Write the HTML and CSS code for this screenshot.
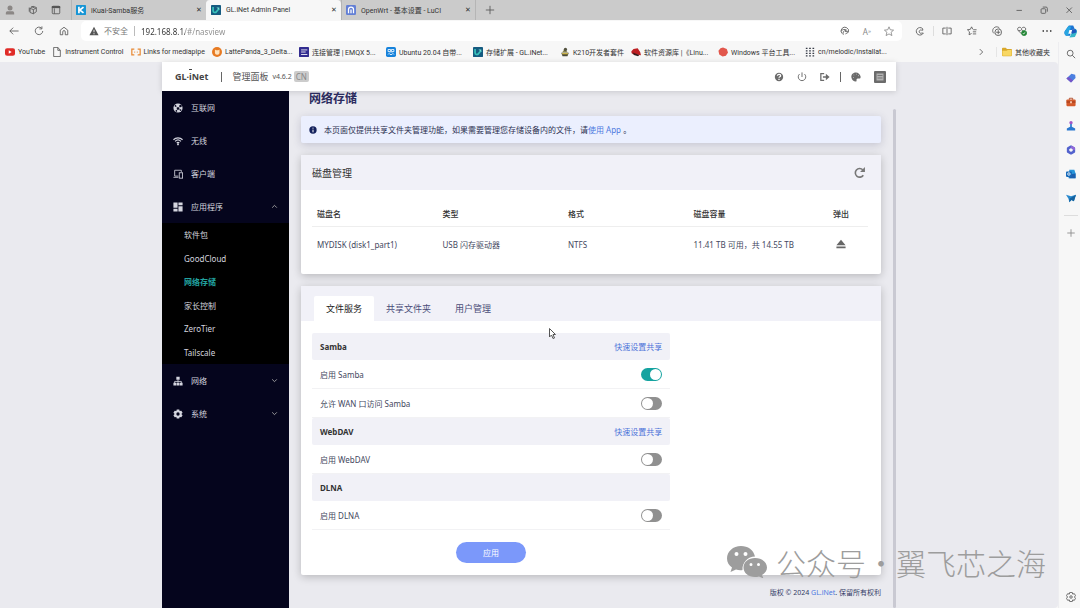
FILE: index.html
```html
<!DOCTYPE html>
<html lang="zh-CN">
<head>
  <meta charset="UTF-8" />
  <meta name="viewport" content="width=device-width, initial-scale=1" />
  <title>GL.iNet Admin Panel</title>
  <link rel="stylesheet" href="styles.css">
</head>
<body>

  <header class="titlebar">
    <div class="titlebar-tools">
      <button class="icon-btn" aria-label="Profile"><svg viewBox="0 0 24 24"><circle cx="12" cy="7" r="6" fill="#8b8785"/><path d="M2 23v-4c0-3 3-4 5-4h10c2 0 5 1 5 4v4z" fill="#8b8785"/></svg></button>
      <button class="icon-btn" aria-label="Workspaces"><svg viewBox="0 0 24 24" class="line"><path d="M7 6l5-3 8 3v10l-7 5-8-3V8zM5 8l8 3 7-4M13 11v10M3 6v10M8 4l8 3"/></svg></button>
      <button class="icon-btn" aria-label="Tab actions"><svg viewBox="0 0 24 24" class="line"><rect x="3" y="3" width="18" height="18" rx="2"/><path d="M2 5h20" stroke-width="5"/><path d="M8 8v13"/></svg></button>
    </div>
    <nav class="tabs">
      <div class="tab">
        <svg viewBox="0 0 24 24"><rect width="24" height="24" rx="2" fill="#1795d5"/><path d="M7 4v16M18 5l-9 7 9 7" fill="none" stroke="#fff" stroke-width="4"/></svg>
        <a href="#">iKuai-Samba服务</a>
        <button aria-label="Close">✕</button>
      </div>
      <div class="tab active">
        <svg viewBox="0 0 24 24"><rect width="24" height="24" rx="2" fill="#155b80"/><path d="M5 5v9c0 5 6 5 8 2l6-7" fill="none" stroke="#39c3bb" stroke-width="4"/><path d="M13 6h7v6z" fill="#78e1d6"/></svg>
        <a href="#">GL.iNet Admin Panel</a>
        <button aria-label="Close">✕</button>
      </div>
      <div class="tab">
        <svg viewBox="0 0 24 24"><rect width="24" height="24" rx="3" fill="#637fd5"/><path d="M6 20V11a6 6 0 0 1 12 0v9M12 11v9" fill="none" stroke="#fff" stroke-width="3"/></svg>
        <a href="#">OpenWrt - 基本设置 - LuCI</a>
        <button aria-label="Close">✕</button>
      </div>
    </nav>
    <button class="icon-btn new-tab" aria-label="New tab"><svg viewBox="0 0 24 24" class="line"><path d="M12 2v20M2 12h20"/></svg></button>
    <div class="window-buttons">
      <button class="icon-btn" aria-label="Minimize"><svg viewBox="0 0 24 24" class="line"><path d="M6 13h13"/></svg></button>
      <button class="icon-btn" aria-label="Restore"><svg viewBox="0 0 24 24" class="line"><rect x="5" y="9" width="11" height="11" rx="2"/><path d="M9 5h8q3 0 3 3v8"/></svg></button>
      <button class="icon-btn" aria-label="Close"><svg viewBox="0 0 24 24" class="line"><path d="M6 6l13 13M19 6L6 19"/></svg></button>
    </div>
  </header>

  <div class="toolbar">
    <div class="toolbar-nav">
      <button class="icon-btn" aria-label="Back"><svg viewBox="0 0 24 24" class="line"><path d="M23 12H2M10 4l-8 8 8 8"/></svg></button>
      <button class="icon-btn" aria-label="Reload"><svg viewBox="0 0 24 24" class="line"><path d="M21 12a9 9 0 1 1-3-7M19 1v6h-6"/></svg></button>
      <button class="icon-btn" aria-label="Home"><svg viewBox="0 0 24 24" class="line"><path d="M3 10l9-7 9 7v11h-6v-7a3 3 0 0 0-6 0v7H3z"/></svg></button>
    </div>
    <div class="address">
      <svg viewBox="0 0 24 24"><path d="M12 2L1 22h22z" fill="#555"/><path d="M12 9v6M12 17v3" stroke="#fff" stroke-width="2"/></svg>
      <label for="url">不安全</label>
      <input id="url" type="text" value="192.168.8.1/#/nasview">
      <button class="icon-btn" aria-label="Collections"><svg viewBox="0 0 24 24" class="line"><path d="M5 18a9 9 0 1 1 15-3l-7 4M3 12c3-4 9-5 13-2M8 21c-2-5 0-10 7-11M12 13h7"/></svg></button>
      <button class="icon-btn read" aria-label="Read aloud">A<sup>»</sup></button>
      <button class="icon-btn" aria-label="Favorite"><svg viewBox="0 0 24 24" class="line thin"><path d="M12 2l3 7 8 1-6 5 2 8-7-4-7 4 2-8-6-5 8-1z"/></svg></button>
    </div>
    <div class="toolbar-tools">
      <button class="icon-btn" aria-label="Extensions"><svg viewBox="0 0 24 24" class="line"><path d="M18 6A9 9 0 1 0 20 17h-4a4 4 0 1 1 0-7h3z"/></svg></button>
      <span class="separator"></span>
      <button class="icon-btn" aria-label="Split screen"><svg viewBox="0 0 24 24" class="line"><path d="M9 5H2v14h7M15 5h7v14h-7M12 2v20"/></svg></button>
      <button class="icon-btn" aria-label="Favorites"><svg viewBox="0 0 24 24" class="line"><path d="M14 8l-3-6-3 6-7 1 5 5-1 7 6-3M15 9h8M14 14h8M14 19h8"/></svg></button>
      <button class="icon-btn" aria-label="Collections"><svg viewBox="0 0 24 24" class="line"><path d="M5 18c-7-6-2-15 5-16 4 0 7 1 8 4"/><circle cx="15" cy="15" r="8"/><path d="M15 10v10M10 15h10"/></svg></button>
      <button class="icon-btn" aria-label="Performance"><svg viewBox="0 0 24 24" class="line"><path d="M11 19l-8-8c-5-7 4-11 8-5 4-6 13-2 9 4M3 11h5l3-3 3 5"/><circle cx="17" cy="17" r="6" fill="#238636" stroke="#238636"/><path d="M14 17l2 2 4-4" stroke="#fff"/></svg></button>
      <button class="icon-btn" aria-label="More"><svg viewBox="0 0 24 24"><circle cx="3" cy="12" r="2"/><circle cx="12" cy="12" r="2"/><circle cx="21" cy="12" r="2"/></svg></button>
      <button class="icon-btn copilot" aria-label="Copilot"><svg viewBox="0 0 24 24"><path d="M9 1h8l3 7h-5L11 20H4C0 17 0 11 3 9z" fill="#1b74d4"/><path d="M3 9l5-7 5 1-5 17H4C0 17 0 12 3 9z" fill="#28a5e1"/><path d="M20 7c5 1 4 6 3 9l-3 6-10 1 3-6z" fill="#35b5c8"/><path d="M15 8h6q3 2 2 6l-8 2-3-2z" fill="#1c56bd"/><path d="M10 9h5l-2 7H8z" fill="#fff"/></svg></button>
    </div>
  </div>

  <div class="window">
    <div class="window-main">
      <nav class="bookmarks">
        <a href="#"><svg viewBox="0 0 24 24"><rect y="3" width="24" height="18" rx="5" fill="#e02b27"/><path d="M9 8v8l7-4z" fill="#fff"/></svg><span>YouTube</span></a>
        <a href="#"><svg viewBox="0 0 24 24" class="line"><path d="M4 1h10l6 7v15H4zM14 1v7h6"/></svg><span>Instrument Control</span></a>
        <a href="#"><svg viewBox="0 0 24 24" fill="none" stroke="#e88a36" stroke-width="3"><path d="M8 5H2v14h6M16 5h6v14h-6M8 12h2M14 12h2"/></svg><span>Links for mediapipe</span></a>
        <a href="#" class="long"><svg viewBox="0 0 24 24"><circle cx="12" cy="12" r="12" fill="#e77a22"/><path d="M7 6l3 2h5l3-2v9a6 6 0 0 1-11 0z" fill="#ffe3bd"/></svg><span>LattePanda_3_Delta...</span></a>
        <a href="#" class="long"><svg viewBox="0 0 24 24"><rect width="24" height="24" rx="2" fill="#322c90"/><path d="M5 7h15M5 12h11M5 18h15" stroke="#fff" stroke-width="2"/></svg><span>连接管理 | EMQX 5...</span></a>
        <a href="#" class="long"><svg viewBox="0 0 24 24"><rect width="24" height="24" rx="4" fill="#1682db"/><path d="M5 6h6v5H5zM13 6h6v5h-6zM5 18l5-5M19 18l-5-5M9 18h6" fill="none" stroke="#fff" stroke-width="2"/></svg><span>Ubuntu 20.04 自带...</span></a>
        <a href="#" class="long"><svg viewBox="0 0 24 24"><rect width="24" height="24" rx="2" fill="#155b80"/><path d="M5 5v9c0 5 6 5 8 2l6-7" fill="none" stroke="#39c3bb" stroke-width="4"/><path d="M13 6h7v6z" fill="#78e1d6"/></svg><span>存储扩展 - GL.iNet...</span></a>
        <a href="#"><svg viewBox="0 0 24 24"><path d="M3 14h18l-3 8H6z" fill="#4c4b38"/><path d="M5 13l6-8 8 8z" fill="#8b8752"/><circle cx="13" cy="6" r="4" fill="#54533f"/><path d="M5 16h14" stroke="#d1b84b" stroke-width="3"/></svg><span>K210开发者套件</span></a>
        <a href="#" class="long"><svg viewBox="0 0 24 24"><path d="M1 10l5-5 10-2 6 9 2 8-13-2C5 18 0 16 1 10z" fill="#bd2023"/><path d="M4 13l16 6-3 3-10-3z" fill="#351d1d"/></svg><span>软件资源库 |《Linu...</span></a>
        <a href="#" class="long"><svg viewBox="0 0 24 24"><path d="M12 1l9 4 3 8-5 8-8 2-8-5-2-9 5-6z" fill="#e2574c"/></svg><span>Windows 平台工具...</span></a>
        <a href="#" class="long"><svg viewBox="0 0 24 24"><path d="M2 3h4M10 3h4M18 3h4M2 9h4M10 9h4M18 9h4M2 15h4M10 15h4M18 15h4M2 21h4M10 21h4M18 21h4" stroke="#363b47" stroke-width="3"/></svg><span>cn/melodic/Installat...</span></a>
        <button class="icon-btn bookmarks-more" aria-label="More bookmarks"><svg viewBox="0 0 24 24" class="line"><path d="M9 5l7 7-7 7"/></svg></button>
        <a href="#" class="folder"><svg viewBox="0 0 24 24"><path d="M0 4q0-2 2-2h7l3 3h10q2 0 2 2v13q0 2-2 2H2q-2 0-2-2z" fill="#d9a82b"/><path d="M1 9h10l3-2h9v13q0 1-1 1H2q-1 0-1-1z" fill="#f8d763"/></svg><span>其他收藏夹</span></a>
      </nav>

      <div class="viewport">
        <div class="app">
          <header class="app-header">
            <a href="#" class="logo" aria-label="GL.iNet">GL<i>·</i><span class="logo-i">i</span>Net</a>
            <span class="divider"></span>
            <span class="panel-name">管理面板</span>
            <span class="version">v4.6.2</span>
            <span class="region">CN</span>
            <div class="app-actions">
              <button class="icon-btn" aria-label="帮助"><svg viewBox="0 0 24 24"><circle cx="12" cy="12" r="10"/><path d="M8 9c1-5 8-4 8 0 0 3-4 2-4 5M12 16v3" fill="none" stroke="#fff" stroke-width="3"/></svg></button>
              <button class="icon-btn" aria-label="电源"><svg viewBox="0 0 24 24" class="line"><path d="M6 5a9 9 0 1 0 12 0M12 1v11"/></svg></button>
              <button class="icon-btn" aria-label="退出"><svg viewBox="0 0 24 24"><path d="M10 4H2v16h8" fill="none" stroke="#6b6b6b" stroke-width="3"/><path d="M7 10h7V4l9 8-9 8v-6H7z"/></svg></button>
              <span class="divider"></span>
              <button class="icon-btn" aria-label="主题"><svg viewBox="0 0 24 24"><path d="M12 1C4 1 0 7 1 13s6 10 10 10c5 0 0-6 4-7 3-1 9 2 8-5-1-6-6-10-11-10z"/><g fill="#fff"><circle cx="6" cy="13" r="1"/><circle cx="7" cy="7" r="1"/><circle cx="13" cy="5" r="1"/><circle cx="18" cy="9" r="1"/></g></svg></button>
              <button class="icon-btn lang" aria-label="语言"><svg viewBox="0 0 24 24"><rect width="24" height="24" rx="2"/><rect x="5" y="5" width="14" height="14" fill="#b2b2b2"/><path d="M7 9h10M7 14h10" stroke="#777" stroke-width="2"/></svg></button>
            </div>
          </header>

          <div class="app-body">
            <nav class="sidebar">
              <a href="#"><svg viewBox="0 0 24 24"><circle cx="12" cy="12" r="11"/><path d="M6 7l6 6 6-6M12 13l-4 6M12 13l6 4" stroke="#05051d"/><g fill="#05051d"><circle cx="6" cy="7" r="2"/><circle cx="18" cy="7" r="3"/><circle cx="12" cy="13" r="3"/><circle cx="8" cy="19" r="2"/><circle cx="18" cy="17" r="2"/></g></svg><span>互联网</span></a>
              <a href="#"><svg viewBox="0 0 24 24" fill="none" stroke="#d4d5df" stroke-width="3"><path d="M1 9c6-6 16-6 22 0M5 13c4-4 10-4 14 0M9 17c2-2 4-2 6 0"/><circle cx="12" cy="20" r="1"/></svg><span>无线</span></a>
              <a href="#"><svg viewBox="0 0 24 24" fill="none" stroke="#d4d5df" stroke-width="2"><path d="M20 7V3H4v14h9M1 20h12"/><rect x="15" y="9" width="8" height="13"/></svg><span>客户端</span></a>
              <a href="#"><svg viewBox="0 0 24 24"><path d="M1 1h10v13H1zM1 16h10v7H1zM13 1h10v7H13zM13 10h10v13H13z"/></svg><span>应用程序</span><svg class="arrow" viewBox="0 0 24 24"><path d="M4 16l8-8 8 8"/></svg></a>
              <div class="submenu">
                <a href="#">软件包</a>
                <a href="#">GoodCloud</a>
                <a href="#" class="current">网络存储</a>
                <a href="#">家长控制</a>
                <a href="#">ZeroTier</a>
                <a href="#">Tailscale</a>
              </div>
              <a href="#"><svg viewBox="0 0 24 24"><path d="M8 2h8v7H8zM1 16h7v7H1zM9 16h6v7H9zM16 16h7v7h-7z"/><path d="M12 9v7M4 17v-4h16v4" fill="none" stroke="#d4d5df" stroke-width="2"/></svg><span>网络</span><svg class="arrow" viewBox="0 0 24 24"><path d="M4 8l8 8 8-8"/></svg></a>
              <a href="#"><svg viewBox="0 0 24 24"><path d="M9 1h6l1 4 4-1 3 5-3 3 3 3-3 5-4-1-1 4H9l-1-4-4 1-3-5 3-3-3-3 3-5 4 1z"/><circle cx="12" cy="12" r="4" fill="#05051d"/></svg><span>系统</span><svg class="arrow" viewBox="0 0 24 24"><path d="M4 8l8 8 8-8"/></svg></a>
            </nav>

            <main class="content">
              <h1>网络存储</h1>

              <div class="notice">
                <svg viewBox="0 0 24 24"><circle cx="12" cy="12" r="11" fill="#14215c"/><path d="M12 5v3M12 11v8" stroke="#fff" stroke-width="3"/></svg>
                <p>本页面仅提供共享文件夹管理功能，如果需要管理您存储设备内的文件，请<a href="#">使用 App</a> 。</p>
              </div>

              <section class="card">
                <div class="card-header">
                  <h2>磁盘管理</h2>
                  <button class="icon-btn refresh" aria-label="刷新"><svg viewBox="0 0 24 24"><path d="M19 17a8 8 0 1 1-1-10" fill="none" stroke="#777" stroke-width="3"/><path d="M22 2v9h-9z" fill="#777"/></svg></button>
                </div>
                <div class="card-body">
                  <table>
                    <thead>
                      <tr>
                        <th>磁盘名</th>
                        <th>类型</th>
                        <th>格式</th>
                        <th>磁盘容量</th>
                        <th>弹出</th>
                      </tr>
                    </thead>
                    <tbody>
                      <tr>
                        <td>MYDISK (disk1_part1)</td>
                        <td>USB 闪存驱动器</td>
                        <td>NTFS</td>
                        <td>11.41 TB 可用，共 14.55 TB</td>
                        <td><button class="icon-btn" aria-label="弹出"><svg viewBox="0 0 24 24"><path d="M12 2l11 13H1zM1 18h22v4H1z"/></svg></button></td>
                      </tr>
                    </tbody>
                  </table>
                </div>
              </section>

              <section class="card">
                <div class="card-tabs">
                  <button class="active">文件服务</button>
                  <button>共享文件夹</button>
                  <button>用户管理</button>
                </div>
                <form class="services">
                  <div class="group"><h3>Samba</h3><a href="#">快速设置共享</a></div>
                  <div class="option"><label for="samba">启用 Samba</label><input id="samba" type="checkbox" checked></div>
                  <div class="option"><label for="samba-wan">允许 WAN 口访问 Samba</label><input id="samba-wan" type="checkbox"></div>
                  <div class="group"><h3>WebDAV</h3><a href="#">快速设置共享</a></div>
                  <div class="option"><label for="webdav">启用 WebDAV</label><input id="webdav" type="checkbox"></div>
                  <div class="group"><h3>DLNA</h3></div>
                  <div class="option"><label for="dlna">启用 DLNA</label><input id="dlna" type="checkbox"></div>
                  <button type="button" class="apply">应用</button>
                </form>
              </section>

              <footer>版权 © 2024 <a href="#">GL.iNet</a>. 保留所有权利</footer>
            </main>
            <div class="scrollbar"></div>
          </div>
        </div>
      </div>
    </div>

    <aside class="edge-bar">
      <button class="icon-btn" aria-label="Search"><svg viewBox="0 0 24 24" class="line"><circle cx="10" cy="10" r="7"/><path d="M15 15l7 7"/></svg></button>
      <button class="icon-btn" aria-label="Shopping"><svg viewBox="0 0 24 24"><path d="M13 2l9 2 1 8-11 11L1 13z" fill="#4b7fe0"/><path d="M1 13l5-4 11 9-5 5z" fill="#7656c7"/></svg></button>
      <button class="icon-btn" aria-label="Tools"><svg viewBox="0 0 24 24"><path d="M8 7V3h8v4" fill="none" stroke="#a83d18" stroke-width="2"/><rect x="1" y="6" width="22" height="16" rx="2" fill="#d45a2a"/><path d="M1 12h22" stroke="#8f3116" stroke-width="2"/><path d="M10 10h4v5h-4z" fill="#ffd6bd"/></svg></button>
      <button class="icon-btn" aria-label="Games"><svg viewBox="0 0 24 24"><circle cx="12" cy="4" r="4" fill="#a356c6"/><path d="M10 7h4v7l8 4v5H2v-5l8-4z" fill="#2a78cf"/></svg></button>
      <button class="icon-btn" aria-label="Microsoft 365"><svg viewBox="0 0 24 24"><path d="M12 4l7 4v8l-7 4-7-4V8z" fill="none" stroke="#5262cd" stroke-width="6" stroke-linejoin="round"/><path d="M12 4l7 4v4" fill="none" stroke="#9367d8" stroke-width="5"/></svg></button>
      <button class="icon-btn" aria-label="Outlook"><svg viewBox="0 0 24 24"><path d="M8 2h12l3 9v11H6z" fill="#2695da"/><path d="M8 13l15-2v11H8z" fill="#1c5fae"/><rect y="6" width="14" height="13" rx="2" fill="#1769b8"/><circle cx="7" cy="12" r="3" fill="none" stroke="#fff" stroke-width="2"/></svg></button>
      <button class="icon-btn" aria-label="Drop"><svg viewBox="0 0 24 24"><path d="M0 4l12 4 12-4-5 16-6-3-5 5-2-8z" fill="#2889ce"/><path d="M8 14L24 4l-5 16-6-3-5 5z" fill="#15629f"/></svg></button>
      <hr>
      <button class="icon-btn" aria-label="Add"><svg viewBox="0 0 24 24" class="line thin"><path d="M12 3v18M3 12h18"/></svg></button>
      <button class="icon-btn settings" aria-label="Settings"><svg viewBox="0 0 24 24" class="line"><path d="M9 1h6l1 4 4-1 3 5-3 3 3 3-3 5-4-1-1 4H9l-1-4-4 1-3-5 3-3-3-3 3-5 4 1z"/><circle cx="12" cy="12" r="3"/></svg></button>
    </aside>
  </div>

  <svg class="cursor" viewBox="0 0 14 22"><path d="M1 1v17l4-4 3 7 3-1-3-7h5z" fill="#fff" stroke="#555" stroke-width="2"/></svg>

  <div class="watermark">
    <svg viewBox="0 0 80 64"><path fill="#9d9d9d" fill-rule="evenodd" d="M28 0C12 0 0 11 0 25c0 8 4 14 10 18l-3 9 11-5c4 1 8 2 13 1-1-15 11-27 25-27C53 8 42 0 28 0zM19 12a4 4 0 1 1 0 8 4 4 0 0 1 0-8zm18 0a4 4 0 1 1 0 8 4 4 0 0 1 0-8z"/><path fill="#9d9d9d" fill-rule="evenodd" d="M56 24c-13 0-23 8-23 19s10 19 23 19c3 0 5 0 8-1l9 4-3-7c6-4 10-9 10-15 0-11-11-19-24-19zm-8 10a3 3 0 1 1 0 6 3 3 0 0 1 0-6zm15 0a3 3 0 1 1 0 6 3 3 0 0 1 0-6z"/></svg>
    <span>公众号</span><span class="dot">·</span><span>翼飞芯之海</span>
  </div>

</body>
</html>
```
FILE: styles.css
```css
* {
  box-sizing: border-box;
}
body {
  margin: 0;
  height: 100vh;
  display: flex;
  flex-direction: column;
  overflow: hidden;
  background: #f7f7f7;
  color: #333;
  font-family: "Noto Sans", "Noto Sans CJK SC", sans-serif;
  font-size: 8px;
}
h1, h2, h3, p {
  margin: 0;
}
a {
  color: inherit;
  text-decoration: none;
}
button, input {
  font: inherit;
  color: inherit;
  margin: 0;
  padding: 0;
  border: none;
  background: none;
}
svg {
  display: block;
  flex: none;
  width: 10px;
  height: 10px;
}
.line {
  fill: none;
  stroke: #555;
  stroke-width: 2;
}
.thin {
  stroke: #888;
}
.icon-btn {
  display: flex;
  align-items: center;
  justify-content: center;
}

/* browser chrome */
.titlebar {
  flex: none;
  display: flex;
  align-items: center;
  height: 20px;
  background: #cbcbcb;
  font-family: Roboto, "Noto Sans CJK SC", sans-serif;
  font-size: 7px;
}
.titlebar-tools {
  display: flex;
  gap: 13px;
  padding: 0 10px 0 5px;
}
.tabs {
  display: flex;
  align-self: stretch;
}
.tab {
  display: flex;
  align-items: center;
  gap: 5px;
  width: 135px;
  padding: 0 4px;
  border-left: 1px solid #b5b5b5;
}
.tab:last-child {
  border-right: 1px solid #b5b5b5;
}
.tab.active {
  background: #f7f7f7;
  border-color: #f7f7f7;
  border-radius: 4px 4px 0 0;
}
.tab a {
  flex: 1;
  white-space: nowrap;
}
.new-tab {
  margin-left: 9px;
}
.window-buttons {
  display: flex;
  gap: 15px;
  margin-left: auto;
  padding-right: 6px;
}
.toolbar {
  flex: none;
  display: flex;
  align-items: center;
  height: 22px;
}
.toolbar-nav {
  display: flex;
  gap: 15px;
  padding: 0 12px 0 9px;
}
.address {
  flex: 1;
  display: flex;
  align-items: center;
  gap: 5px;
  height: 20px;
  padding: 0 8px;
  border-radius: 5px;
  background: #fff;
}
.address label {
  padding-right: 6px;
  border-right: 1px solid #bbb;
  color: #777;
  line-height: 10px;
}
.address input {
  flex: 1;
  min-width: 0;
  padding-left: 1px;
  background: linear-gradient(90deg, #333 45px, #8c8c8c 45px);
  background-clip: text;
  -webkit-background-clip: text;
  color: transparent;
}
.address .icon-btn {
  margin-left: 8px;
}
.read {
  color: #888;
}
.read sup {
  font-size: 6px;
}
.toolbar-tools {
  display: flex;
  align-items: center;
  gap: 15px;
  padding: 0 3px 0 13px;
}
.separator {
  width: 1px;
  height: 10px;
  margin: 0 -7px;
  background: #ddd;
}
.toolbar-tools .copilot {
  margin-left: -3px;
}
.copilot svg {
  width: 13px;
  height: 13px;
}
.window {
  flex: 1;
  min-height: 0;
  display: flex;
}
.window-main {
  flex: 1;
  min-width: 0;
  display: flex;
  flex-direction: column;
}
.bookmarks {
  flex: none;
  display: flex;
  align-items: center;
  gap: 7px;
  height: 20px;
  padding: 0 8px 0 5px;
  font-family: Roboto, "Noto Sans CJK SC", sans-serif;
  font-size: 7px;
}
.bookmarks a {
  display: flex;
  align-items: center;
  gap: 3px;
  white-space: nowrap;
}
.bookmarks .long {
  width: 80px;
}
.bookmarks-more {
  margin-left: auto;
}
.bookmarks .folder {
  margin-left: 3px;
  padding-left: 5px;
  border-left: 1px solid #e5e5e5;
}
.viewport {
  flex: 1;
  min-height: 0;
  display: flex;
  justify-content: center;
  background: #eaeaef;
  border-radius: 0 4px 4px 0;
}
.edge-bar {
  display: flex;
  flex-direction: column;
  align-items: center;
  gap: 14px;
  width: 22px;
  padding: 7px 0 6px 2px;
  border-left: 1px solid #ededf0;
}
.edge-bar hr {
  width: 14px;
  margin: -2px 0;
  border: none;
  border-top: 1px solid #ddd;
}
.edge-bar .settings {
  margin-top: auto;
}

/* router admin panel */
.app {
  display: flex;
  flex-direction: column;
  width: 100%;
  max-width: 734px;
}
.app-header {
  flex: none;
  display: flex;
  align-items: center;
  height: 29px;
  padding: 0 10px 0 13px;
  background: #fff;
  box-shadow: 0 1px 6px rgba(0, 0, 0, 0.15);
  color: #555;
}
.logo {
  color: #444;
  font-size: 9px;
  font-weight: bold;
}
.logo i {
  font-style: normal;
}
.logo-i {
  border-top: 1px solid #444;
}
.divider {
  width: 1px;
  height: 10px;
  background: #666;
}
.app-header > .divider {
  margin: 0 10px 0 13px;
}
.panel-name {
  font-size: 9px;
}
.version {
  padding: 0 2px 0 4px;
  font-size: 7px;
}
.region {
  padding: 0 2px;
  border-radius: 2px;
  background: #ccc;
  color: #888;
  line-height: 11px;
}
.app-actions {
  display: flex;
  align-items: center;
  gap: 13px;
  margin-left: auto;
}
.app-actions .divider {
  margin: 0 -3px;
}
.app-actions svg {
  fill: #6b6b6b;
}
.app-actions .line {
  fill: none;
}
.lang svg {
  width: 12px;
  height: 12px;
}
.app-body {
  flex: 1;
  min-height: 0;
  display: flex;
}
.sidebar {
  flex: none;
  width: 127px;
  background: #05051d;
  color: #d4d5df;
}
.sidebar > a {
  display: flex;
  align-items: center;
  gap: 8px;
  height: 33px;
  padding: 0 11px;
}
.sidebar svg {
  fill: #d4d5df;
}
.sidebar svg[fill="none"] {
  fill: none;
}
.sidebar .arrow {
  width: 7px;
  height: 7px;
  margin-left: auto;
  fill: none;
  stroke: #aaa;
  stroke-width: 3;
}
.submenu {
  display: grid;
  grid-auto-rows: 1fr;
  align-items: center;
  height: 141px;
  padding-left: 22px;
  background: #000;
}
.submenu .current {
  color: #22a3a0;
  font-weight: bold;
}
.content {
  flex: 1;
  min-width: 0;
  display: flex;
  flex-direction: column;
  gap: 12px;
  padding: 0 12px;
}
.content h1 {
  margin: 0 8px -2px;
  color: #2b2b5e;
  font-size: 12px;
  line-height: 15px;
}
.notice {
  display: flex;
  align-items: center;
  gap: 7px;
  height: 27px;
  padding: 0 8px;
  border-radius: 2px;
  background: #ebeffe;
  box-shadow: 0 2px 8px rgba(60, 60, 100, 0.22);
  color: #2b2f50;
}
.notice svg {
  width: 8px;
  height: 8px;
}
.notice a, footer a {
  color: #4c78e0;
}
.card {
  border-radius: 2px;
  background: #fff;
  box-shadow: 0 2px 8px rgba(0, 0, 0, 0.22);
}
.card-header {
  display: flex;
  align-items: center;
  justify-content: space-between;
  height: 35px;
  padding: 0 15px 0 11px;
  background: #f1f1f8;
}
.card-header h2 {
  font-size: 10px;
  font-weight: normal;
}
.refresh svg {
  width: 13px;
  height: 13px;
}
.card-body {
  padding: 0 13px 12px 11px;
}
table {
  width: 100%;
  border-collapse: collapse;
  table-layout: fixed;
}
th, td {
  height: 36px;
  padding: 0 5px;
  text-align: left;
}
th {
  padding-top: 11px;
  border-bottom: 1px solid #eee;
  font-weight: 500;
}
td {
  color: #444860;
}
th:last-child, td:last-child {
  width: 54px;
  text-align: center;
}
td .icon-btn {
  width: 100%;
}
td svg {
  fill: #666;
}
.card-tabs {
  display: flex;
  align-items: flex-end;
  height: 35px;
  padding-left: 13px;
  background: #f1f1f8;
  font-size: 9px;
}
.card-tabs button {
  height: 25px;
  padding: 0 12px;
  color: #4a4d78;
}
.card-tabs .active {
  background: #fff;
  color: #222;
  border-radius: 2px 2px 0 0;
}
.services {
  display: flex;
  flex-direction: column;
  width: 64%;
  padding: 12px 2px 12px 11px;
}
.group, .option {
  display: flex;
  align-items: center;
  justify-content: space-between;
  padding: 0 8px;
}
.group {
  height: 27px;
  border-radius: 2px;
  background: #f1f1f7;
}
.group h3 {
  font-size: 8px;
}
.group a {
  color: #4e73d9;
}
.option {
  height: 29px;
  border-bottom: 1px solid #f2f2f4;
  color: #444860;
}
.option input {
  appearance: none;
  width: 21px;
  height: 13px;
  padding: 1px;
  border-radius: 7px;
  background: #909090;
}
.option input::before {
  content: "";
  display: block;
  width: 11px;
  height: 11px;
  border-radius: 50%;
  background: #fff;
}
.option input:checked {
  background: #15a3a0;
}
.option input:checked::before {
  margin-left: auto;
}
.apply {
  align-self: center;
  width: 70px;
  height: 21px;
  margin-top: 12px;
  border-radius: 11px;
  background: #7b98fa;
  color: #fff;
}
footer {
  text-align: right;
  color: #333a66;
  font-size: 7px;
}
.scrollbar {
  width: 3px;
  margin-top: 18px;
  border-radius: 2px;
  background: #c9c9d2;
}

/* things lying over the page */
.cursor {
  position: absolute;
  left: 549px;
  top: 328px;
  width: 7px;
  height: 11px;
}
.watermark {
  position: absolute;
  right: 34px;
  bottom: 24px;
  display: flex;
  align-items: center;
  color: #9d9d9d;
  font-family: "Noto Sans CJK SC", sans-serif;
  font-size: 30px;
  font-weight: 300;
  line-height: 44px;
}
.watermark svg {
  width: 40px;
  height: 32px;
  margin-right: 9px;
}
.watermark .dot {
  width: 30px;
  text-align: center;
}
```
